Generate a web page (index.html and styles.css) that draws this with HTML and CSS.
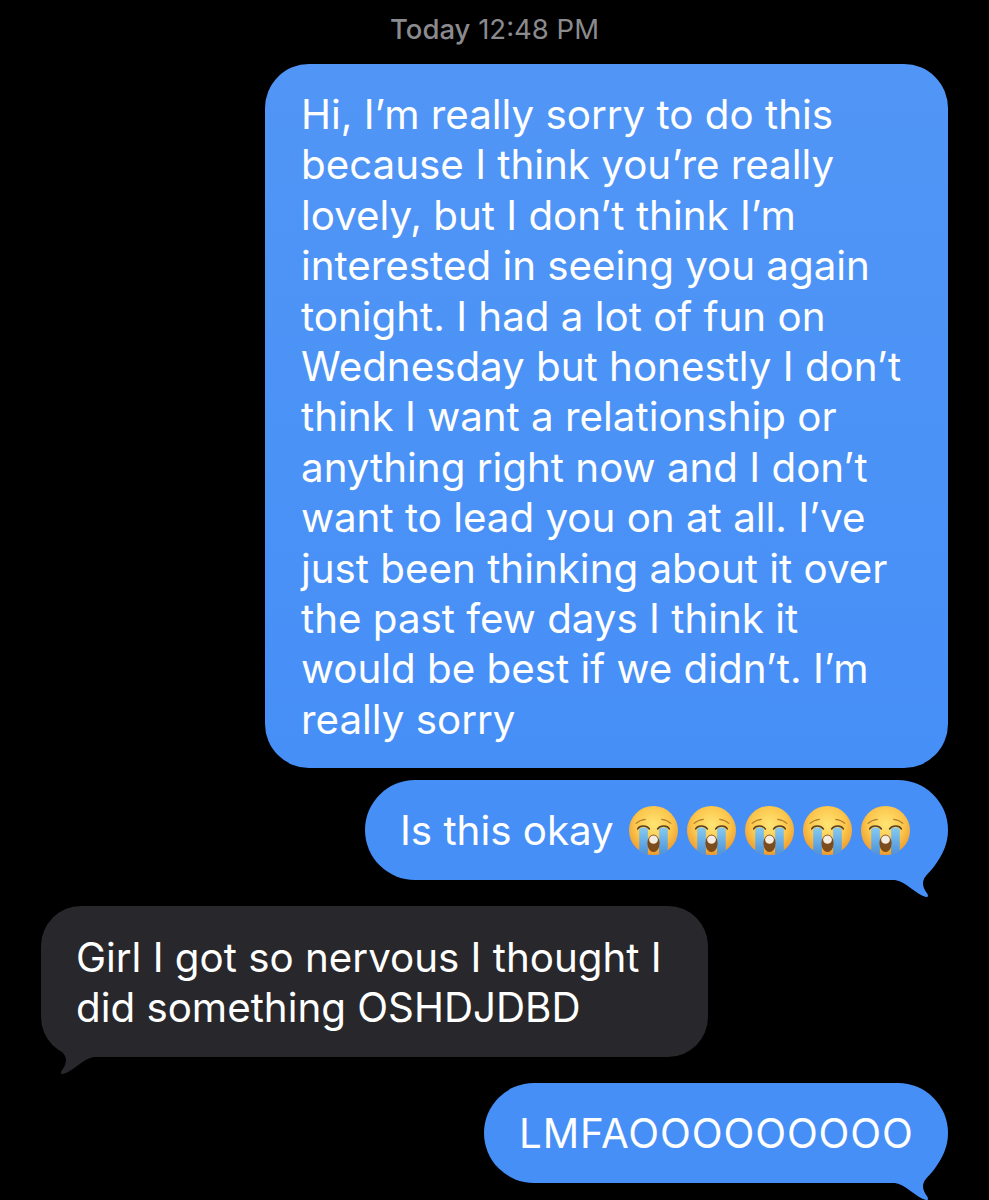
FILE: index.html
```html
<!DOCTYPE html>
<html lang="en">
<head>
    <meta charset="UTF-8">
    <title>Messages</title>
    <link rel="stylesheet" href="styles.css">
</head>
<body>
    <svg class="defs" width="0" height="0">
        <defs>
            <radialGradient id="face" cx="50%" cy="38%" r="62%">
                <stop offset="0" stop-color="#fee574"/>
                <stop offset="0.6" stop-color="#fcc64c"/>
                <stop offset="1" stop-color="#ec9a2e"/>
            </radialGradient>
            <linearGradient id="tear" x1="0" y1="0" x2="0" y2="1">
                <stop offset="0" stop-color="#86caf0"/>
                <stop offset="1" stop-color="#4b92dc"/>
            </linearGradient>
            <symbol id="cry" viewBox="0 0 48 48">
                <circle cx="24" cy="24" r="24" fill="url(#face)"/>
                <path d="M10 24a4.200 3 0 0 1 8.500 0V47.400A24 24 0 0 1 10 43.500z" fill="url(#tear)"/>
                <path d="M29.500 24a4.200 3 0 0 1 8.500 0V43.500A24 24 0 0 1 29.500 47.400z" fill="url(#tear)"/>
                <path d="M8.500 22.500c2-3.500 8.500-4 11.500 0M39.500 22.500c-2-3.500-8.500-4-11.500 0" fill="none" stroke="#5a4024" stroke-width="1.500" stroke-linecap="round"/>
                <path d="M7 17c2-2 5-3.500 9-4M41 17c-2-2-5-3.500-9-4" fill="none" stroke="#b27e30" stroke-width="1.200" stroke-linecap="round"/>
                <ellipse cx="24" cy="36.500" rx="6" ry="8.500" fill="#7d4c1c"/>
                <ellipse cx="24" cy="33" rx="4.300" ry="4" fill="#f4ece0"/>
            </symbol>
            <symbol id="tail" viewBox="0 0 60 55">
                <path d="M0 30L5 35C15 36 27 50 36 52C38 52.500 38.500 51 37.500 49C33 43 32 38 34 34C37 28 47 22 53 5L30 0L30 10Z"/>
            </symbol>
        </defs>
    </svg>

    <main class="thread">
        <div class="stamp"><b>Today</b> 12:48 PM</div>

        <div class="bubble sent first">
            Hi, I’m really sorry to do this<br>
            because I think you’re really<br>
            lovely, but I don’t think I’m<br>
            interested in seeing you again<br>
            tonight. I had a lot of fun on<br>
            Wednesday but honestly I don’t<br>
            think I want a relationship or<br>
            anything right now and I don’t<br>
            want to lead you on at all. I’ve<br>
            just been thinking about it over<br>
            the past few days I think it<br>
            would be best if we didn’t. I’m<br>
            really sorry
        </div>

        <div class="bubble sent okay">
            <span>Is this okay</span>
            <span class="emojis">
                <svg class="emoji"><use href="#cry"/></svg>
                <svg class="emoji"><use href="#cry"/></svg>
                <svg class="emoji"><use href="#cry"/></svg>
                <svg class="emoji"><use href="#cry"/></svg>
                <svg class="emoji"><use href="#cry"/></svg>
            </span>
            <svg class="tail"><use href="#tail"/></svg>
        </div>

        <div class="bubble got">
            Girl I got so nervous I thought I<br>
            did something OSHDJDBD
            <svg class="tail tail-left"><use href="#tail"/></svg>
        </div>

        <div class="bubble sent last">
            LMFAOOOOOOOOO
            <svg class="tail"><use href="#tail"/></svg>
        </div>
    </main>
</body>
</html>
```

FILE: styles.css
```css
html, body {
    margin: 0;
    height: 1200px;
    overflow: hidden;
    background-color: #000;
}

.defs {
    position: absolute;
}

.thread {
    display: flex;
    flex-direction: column;
    align-items: flex-end;
    padding: 13px 41px 0 41px;
    font-family: 'Inter', 'Liberation Sans', sans-serif;
    color: #fff;
}

.stamp {
    align-self: center;
    margin: 0 0 19px 0;
    height: 32px;
    line-height: 32px;
    font-size: 27.500px;
    color: #8b8b8f;
}

.stamp b {
    font-weight: 500;
}

.bubble {
    position: relative;
    box-sizing: border-box;
    padding: 26px 35px;
    border-radius: 50px;
    font-size: 40.300px;
    line-height: 50.400px;
    white-space: nowrap;
}

.sent {
    background-color: #468ff7;
    fill: #468ff7;
}

.first {
    width: 683px;
    height: 704px;
    padding-left: 36px;
    border-radius: 44px;
    background: linear-gradient(#5196f6, #468ff7);
}

.okay {
    display: flex;
    align-items: center;
    gap: 15px;
    width: 583px;
    height: 100px;
    margin-top: 12px;
    padding-top: 2px;
    padding-bottom: 0;
}

.emojis {
    display: flex;
    gap: 9px;
    margin-top: -2px;
}

.emoji {
    width: 49px;
    height: 49px;
}

.got {
    align-self: flex-start;
    width: 667px;
    height: 151px;
    margin-top: 26px;
    padding-top: 27px;
    background-color: #28282c;
    fill: #28282c;
    border-radius: 40px;
}

.last {
    width: 464px;
    height: 100px;
    margin-top: 26px;
    letter-spacing: 0.9px;
}

.tail {
    position: absolute;
    width: 60px;
    height: 55px;
    right: -2px;
    bottom: -20px;
}

.tail-left {
    right: auto;
    left: -2px;
    transform: scaleX(-1);
}
```
